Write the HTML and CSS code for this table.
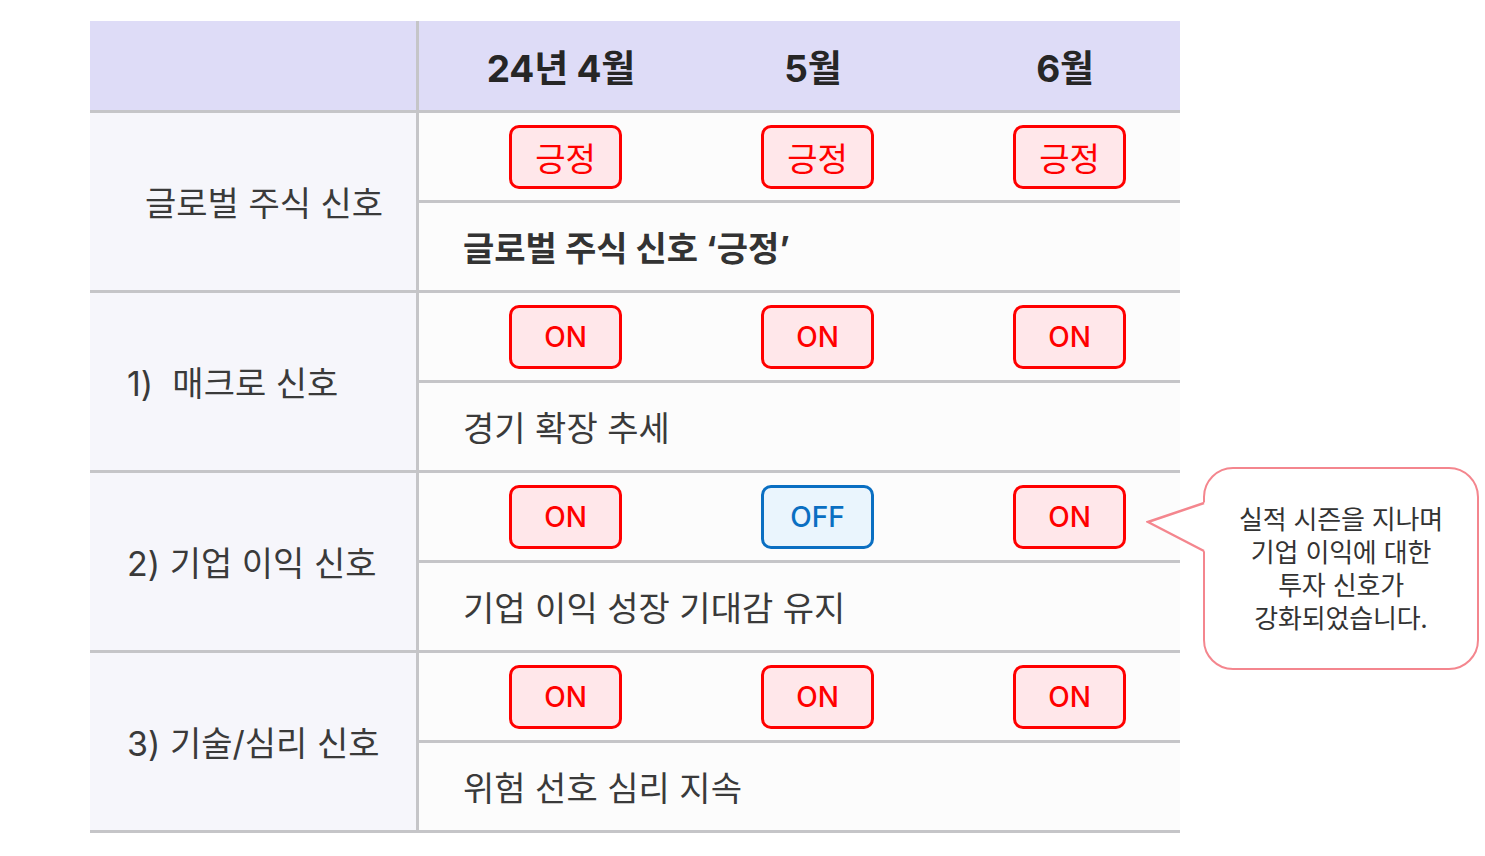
FILE: index.html
```html
<!DOCTYPE html>
<html lang="ko">
<head>
<meta charset="utf-8">
<link rel="stylesheet" href="styles.css">
</head>
<body>
<div class="page">
  <div class="table">
    <div class="head">
      <div class="head-left"></div>
      <div class="head-right">
        <div class="col">24년 4월</div>
        <div class="col">5월</div>
        <div class="col">6월</div>
      </div>
    </div>

    <div class="section">
      <div class="label label-first">글로벌 주식 신호</div>
      <div class="right">
        <div class="badges">
          <span class="badge on kr">긍정</span>
          <span class="badge on kr">긍정</span>
          <span class="badge on kr">긍정</span>
        </div>
        <div class="desc bold">글로벌 주식 신호 ‘긍정’</div>
      </div>
    </div>

    <div class="section">
      <div class="label">1)&nbsp;&nbsp;매크로 신호</div>
      <div class="right">
        <div class="badges">
          <span class="badge on">ON</span>
          <span class="badge on">ON</span>
          <span class="badge on">ON</span>
        </div>
        <div class="desc">경기 확장 추세</div>
      </div>
    </div>

    <div class="section">
      <div class="label">2) 기업 이익 신호</div>
      <div class="right">
        <div class="badges">
          <span class="badge on">ON</span>
          <span class="badge off">OFF</span>
          <span class="badge on">ON</span>
        </div>
        <div class="desc">기업 이익 성장 기대감 유지</div>
      </div>
    </div>

    <div class="section">
      <div class="label">3) 기술/심리 신호</div>
      <div class="right">
        <div class="badges">
          <span class="badge on">ON</span>
          <span class="badge on">ON</span>
          <span class="badge on">ON</span>
        </div>
        <div class="desc">위험 선호 심리 지속</div>
      </div>
    </div>
  </div>

  <div class="callout">
    <svg class="tail" width="60" height="52" viewBox="0 0 60 52">
      <polygon points="60,0 2,20 60,50" fill="#ffffff"/>
      <polyline points="58,1 2,20 58,49" fill="none" stroke="#f4868e" stroke-width="2.5" stroke-linejoin="miter"/>
    </svg>
    <p class="callout-text">실적 시즌을 지나며<br>기업 이익에 대한<br>투자 신호가<br>강화되었습니다.</p>
  </div>
</div>
</body>
</html>
```

FILE: styles.css
```css
* { box-sizing: border-box; }
html, body { margin: 0; padding: 0; background: #ffffff; }
body {
  font-family: Inter, "Noto Sans CJK KR", sans-serif;
  color: #3a3a3a;
}
.page {
  position: relative;
  width: 1485px;
  height: 856px;
  padding: 21px 0 0 90px;
}
.table {
  width: 1090px;
  display: flex;
  flex-direction: column;
}
.head {
  display: flex;
  height: 92px;
  background: #dedcf7;
  border-bottom: 3px solid #c5c5c8;
}
.head-left {
  width: 329px;
  border-right: 3px solid #c5c5c8;
}
.head-right {
  flex: 1;
  display: flex;
  align-items: center;
  padding-left: 66px;
  gap: 100px;
}
.col {
  width: 152px;
  text-align: center;
  font-size: 37px;
  font-weight: 700;
  color: #262626;
  letter-spacing: -0.2px;
}
.section {
  display: flex;
  height: 180px;
  border-bottom: 3px solid #c5c5c8;
}
.label {
  width: 329px;
  background: #f6f6fb;
  border-right: 3px solid #c5c5c8;
  display: flex;
  align-items: center;
  padding-left: 37px;
  font-size: 34px;
  color: #3a3a3a;
}
.label-first { padding-left: 55px; }
.right {
  flex: 1;
  background: #fcfcfc;
  display: flex;
  flex-direction: column;
}
.badges {
  height: 90px;
  border-bottom: 3px solid #c5c5c8;
  display: flex;
  align-items: center;
  padding-left: 90px;
  gap: 139px;
}
.badge {
  width: 113px;
  height: 64px;
  border-radius: 10px;
  border: 3px solid #ff0000;
  background: #ffe7ea;
  color: #ff0000;
  display: flex;
  align-items: center;
  justify-content: center;
  font-size: 28px;
  font-weight: 500;
}
.badge.kr {
  font-size: 33px;
  font-weight: 400;
}
.badge.off {
  border-color: #0a6fc2;
  background: #eaf5fd;
  color: #0a6fc2;
}
.desc {
  flex: 1;
  display: flex;
  align-items: center;
  padding-left: 44px;
  font-size: 34px;
  color: #3a3a3a;
}
.desc.bold { font-weight: 700; color: #333333; }
.callout {
  position: absolute;
  left: 1203px;
  top: 467px;
  width: 276px;
  height: 203px;
  border: 2.5px solid #f4868e;
  border-radius: 30px;
  background: #ffffff;
  display: flex;
  align-items: center;
  justify-content: center;
}
.tail {
  position: absolute;
  left: -59px;
  top: 33px;
}
.callout-text {
  margin: 0;
  text-align: center;
  font-size: 26px;
  line-height: 33px;
  color: #333333;
  letter-spacing: -0.2px;
}
```
